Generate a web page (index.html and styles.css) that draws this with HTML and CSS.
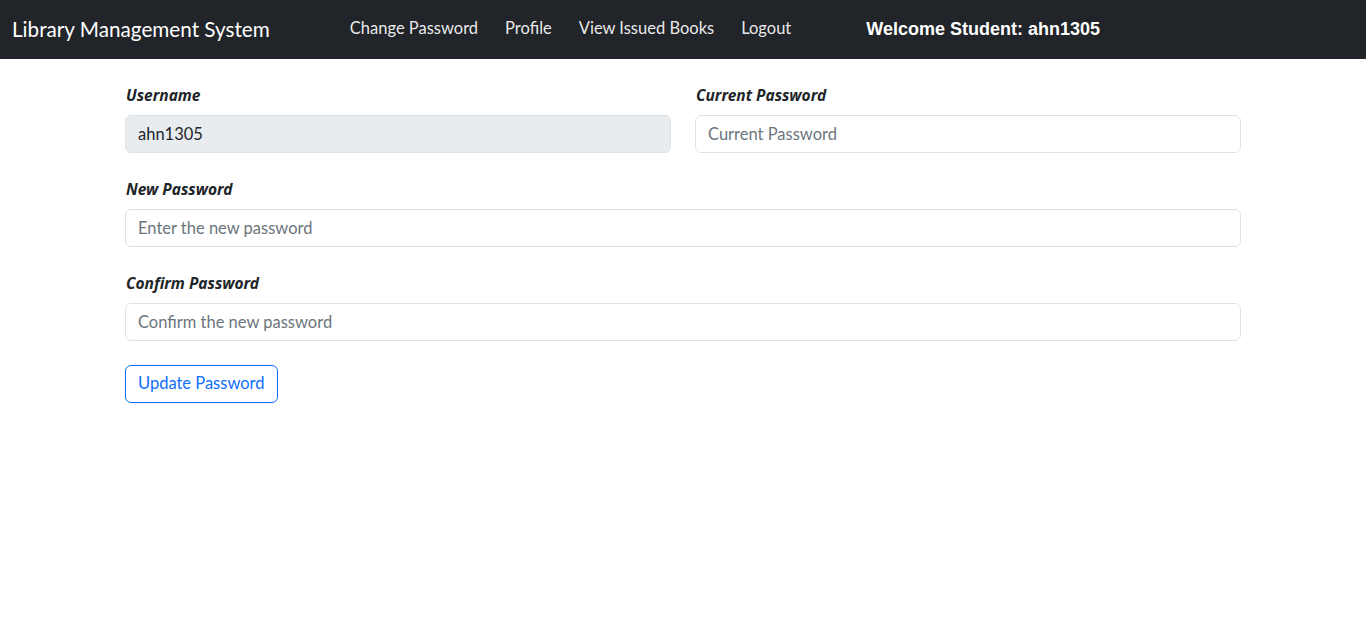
FILE: index.html
```html
<!DOCTYPE html>
<html lang="en">
<head>
<meta charset="utf-8">
<title>Change Password</title>
<link rel="stylesheet" href="styles.css">
</head>
<body>
<nav class="navbar">
  <a class="brand" href="#">Library Management System</a>
  <ul class="nav">
    <li><a class="nav-link" href="#">Change Password</a></li>
    <li><a class="nav-link" href="#">Profile</a></li>
    <li><a class="nav-link" href="#">View Issued Books</a></li>
    <li><a class="nav-link" href="#">Logout</a></li>
  </ul>
  <span class="welcome">Welcome Student: ahn1305</span>
</nav>
<main class="content">
  <form class="form">
    <div class="row">
      <div class="field">
        <label class="label">Username</label>
        <input class="input" type="text" value="ahn1305" disabled>
      </div>
      <div class="field">
        <label class="label">Current Password</label>
        <input class="input" type="password" placeholder="Current Password">
      </div>
    </div>
    <div class="field">
      <label class="label">New Password</label>
      <input class="input" type="password" placeholder="Enter the new password">
    </div>
    <div class="field">
      <label class="label">Confirm Password</label>
      <input class="input" type="password" placeholder="Confirm the new password">
    </div>
    <div class="actions">
      <button class="btn" type="button">Update Password</button>
    </div>
  </form>
</main>
</body>
</html>
```
FILE: styles.css
```css
* { box-sizing: border-box; }
body {
  margin: 0;
  font-family: Lato, "Noto Sans", sans-serif;
  font-size: 16.5px;
  line-height: 1.5;
  color: #212529;
  background: #fff;
}
.navbar {
  display: flex;
  align-items: center;
  height: 59px;
  padding: 0 12px 2px;
  background: #212529;
}
.brand {
  color: #fff;
  text-decoration: none;
  font-size: 20.7px;
  line-height: 30px;
}
.nav {
  display: flex;
  list-style: none;
  margin: 0 0 0 80px;
  padding: 0;
  gap: 27px;
}
.nav-link {
  color: rgba(255,255,255,.92);
  text-decoration: none;
  font-size: 16.5px;
}
.welcome {
  margin-left: 75px;
  padding-top: 2px;
  color: #fff;
  font-family: "Liberation Sans", Arial, sans-serif;
  font-weight: bold;
  font-size: 18px;
}
.content {
  padding: 24px 125px 0;
}
.form {
  display: flex;
  flex-direction: column;
  gap: 24px;
}
.row {
  display: grid;
  grid-template-columns: 1fr 1fr;
  gap: 24px;
}
.field {
  display: flex;
  flex-direction: column;
}
.label {
  font-family: "Noto Sans", Lato, sans-serif;
  font-size: 15.5px;
  font-weight: bold;
  font-style: italic;
  line-height: 24px;
  margin-bottom: 8px;
  padding-left: 1px;
  padding-bottom: 1px;
  height: 24px;
}
.input {
  height: 38px;
  padding: 5px 12px 6px;
  font: inherit;
  color: #212529;
  border: 1px solid #dee2e6;
  border-radius: 6px;
  background: #fff;
  outline: none;
}
.input::placeholder { color: #6c757d; }
.input:disabled { background: #e9ecef; border-color: #dee2e6; }
.actions { display: flex; }
.btn {
  height: 38px;
  padding: 5px 12px 6px;
  font: inherit;
  color: #0d6efd;
  background: transparent;
  border: 1px solid #0d6efd;
  border-radius: 6px;
}
```
